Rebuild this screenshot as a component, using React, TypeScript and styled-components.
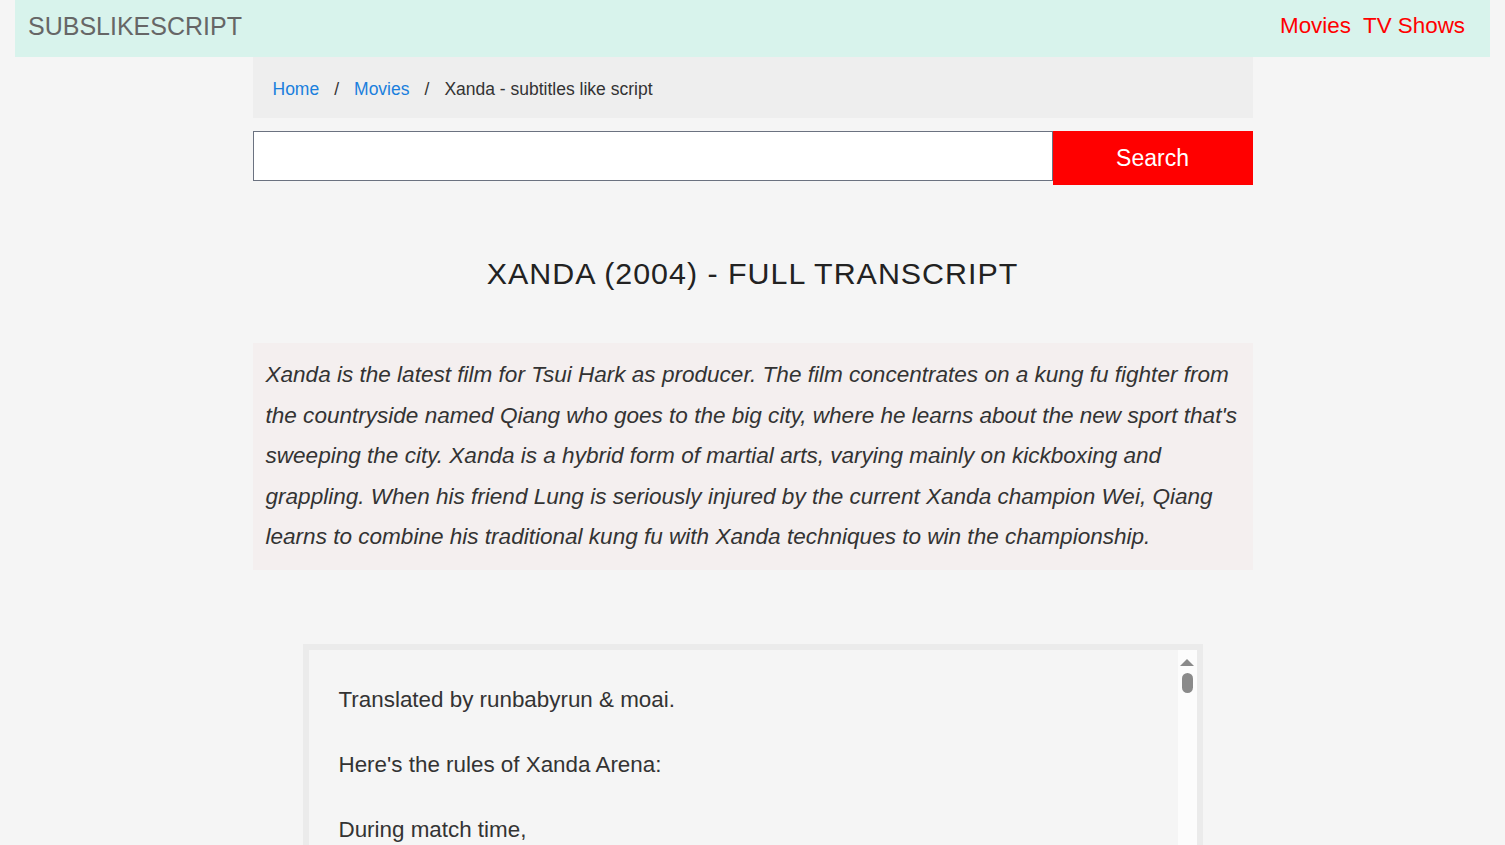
import { FC } from 'react';
import styled, { createGlobalStyle } from 'styled-components';

const GlobalStyle = createGlobalStyle`
  html {
    scrollbar-width: none;
  }
  body {
    margin: 0;
    background: #f5f5f5;
    font-family: "Liberation Sans", Arial, sans-serif;
    color: #333;
  }
`;

const Header = styled.header`
  display: flex;
  align-items: center;
  justify-content: space-between;
  height: 57px;
  margin: 0 15px;
  padding: 0 25px 0 13px;
  background: #d8f3ec;
`;

const Logo = styled.a`
  font-size: 25px;
  color: #666;
  text-decoration: none;
  padding-bottom: 5px;
`;

const NavLinks = styled.nav`
  display: flex;
  gap: 12px;
  padding-bottom: 6px;
`;

const NavLink = styled.a`
  font-size: 22.4px;
  color: #ff0000;
  text-decoration: none;
`;

const Container = styled.main`
  width: 1000px;
  margin: 0 auto;
`;

const Breadcrumb = styled.ol`
  display: flex;
  align-items: center;
  box-sizing: border-box;
  height: 61px;
  margin: 0;
  padding: 4px 20px 0;
  list-style: none;
  background: #eeeeee;
  font-size: 17.5px;
`;

const Crumb = styled.li`
  color: #333;
  & + &::before {
    content: '/';
    padding: 0 15px;
    color: #333;
  }
  a {
    color: #1a7fdd;
    text-decoration: none;
  }
`;

const SearchForm = styled.form`
  display: flex;
  align-items: flex-start;
  margin-top: 13px;
`;

const SearchInput = styled.input`
  box-sizing: border-box;
  width: 800px;
  height: 50px;
  border: 1px solid #6b7280;
  background: #fff;
  outline: none;
`;

const SearchButton = styled.button`
  width: 200px;
  height: 54px;
  border: none;
  background: #ff0000;
  color: #fff;
  font-family: inherit;
  font-size: 23px;
`;

const Title = styled.h1`
  margin: 71px 0 52px;
  text-align: center;
  font-size: 30.4px;
  font-weight: 400;
  letter-spacing: 1px;
  color: #222;
`;

const Description = styled.p`
  margin: 0;
  padding: 12px 12px 12px 13px;
  background: #f4efef;
  font-size: 22.55px;
  font-style: italic;
  line-height: 40.5px;
  color: #333;
`;

const ScriptFrame = styled.div`
  display: flex;
  height: 620px;
  margin: 74px 50px 0;
  border: 6px solid #ebebeb;
  border-bottom: none;
`;

const ScriptBody = styled.div`
  flex: 1;
  overflow: hidden;
  padding: 34px 30px 0;
  font-size: 22.4px;
  line-height: 32.6px;
  color: #333;
`;

const ScrollTrack = styled.div`
  display: flex;
  flex-direction: column;
  align-items: center;
  width: 19px;
  background: #fcfcfc;
`;

const ScrollArrow = styled.div`
  width: 0;
  height: 0;
  margin-top: 9px;
  border-left: 7px solid transparent;
  border-right: 7px solid transparent;
  border-bottom: 7px solid #8a8a8a;
`;

const ScrollThumb = styled.div`
  width: 11px;
  height: 20px;
  margin-top: 7px;
  border-radius: 6px;
  background: #8a8a8a;
`;

const Line = styled.div`
  margin-bottom: 32.6px;
`;

const scriptLines = [
  'Translated by runbabyrun & moai.',
  "Here's the rules of Xanda Arena:",
  'During match time,',
];

const App: FC = () => {
  return (
    <>
      <GlobalStyle />
      <Header>
        <Logo href="#">SUBSLIKESCRIPT</Logo>
        <NavLinks>
          <NavLink href="#">Movies</NavLink>
          <NavLink href="#">TV Shows</NavLink>
        </NavLinks>
      </Header>
      <Container>
        <Breadcrumb>
          <Crumb><a href="#">Home</a></Crumb>
          <Crumb><a href="#">Movies</a></Crumb>
          <Crumb>Xanda - subtitles like script</Crumb>
        </Breadcrumb>
        <SearchForm onSubmit={e => e.preventDefault()}>
          <SearchInput type="text" />
          <SearchButton type="submit">Search</SearchButton>
        </SearchForm>
        <Title>XANDA (2004) - FULL TRANSCRIPT</Title>
        <Description>
          Xanda is the latest film for Tsui Hark as producer. The film concentrates on a kung fu fighter from
          the countryside named Qiang who goes to the big city, where he learns about the new sport that's
          sweeping the city. Xanda is a hybrid form of martial arts, varying mainly on kickboxing and
          grappling. When his friend Lung is seriously injured by the current Xanda champion Wei, Qiang
          learns to combine his traditional kung fu with Xanda techniques to win the championship.
        </Description>
        <ScriptFrame>
          <ScriptBody>
            {scriptLines.map(line => (
              <Line key={line}>{line}</Line>
            ))}
          </ScriptBody>
          <ScrollTrack>
            <ScrollArrow />
            <ScrollThumb />
          </ScrollTrack>
        </ScriptFrame>
      </Container>
    </>
  );
};

export default App;
